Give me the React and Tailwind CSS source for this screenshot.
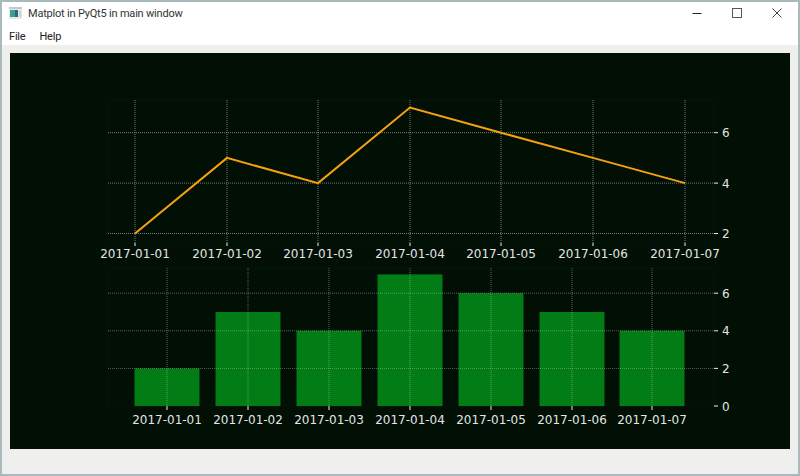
const dates = ["2017-01-01", "2017-01-02", "2017-01-03", "2017-01-04", "2017-01-05", "2017-01-06", "2017-01-07"];
const values = [2, 5, 4, 7, 6, 5, 4];

const lineX = [135, 227, 318, 410, 501, 593, 685];
const barX = [167, 248, 329, 410, 491, 572, 652];

const lineY = (v) => 233.5 - (v - 2) * 25.2;
const barY = (v) => 406 - v * 18.8;

function Charts() {
  return (
    <svg viewBox="10 53 780 396" className="block w-full h-full" style={{ fontFamily: '"DejaVu Sans", sans-serif' }}>
      {/* top plot */}
      <rect x="108" y="100" width="606" height="143" fill="none" stroke="#07160b" strokeWidth="1" />
      {lineX.map((x) => (
        <line key={x} x1={x} x2={x} y1="100" y2="243" stroke="#a5afa7" strokeWidth="0.7" strokeDasharray="1 1" />
      ))}
      {[2, 4, 6].map((v) => (
        <line key={v} x1="108" x2="714" y1={lineY(v)} y2={lineY(v)} stroke="#a5afa7" strokeWidth="0.7" strokeDasharray="1 1" />
      ))}
      <polyline
        points={values.map((v, i) => `${lineX[i]},${lineY(v)}`).join(" ")}
        fill="none"
        stroke="#f5a20f"
        strokeWidth="2"
      />
      {lineX.map((x, i) => (
        <g key={x}>
          <line x1={x} x2={x} y1="243" y2="246" stroke="#eeeeee" strokeWidth="1" />
          <text x={x} y="258" textAnchor="middle" fontSize="12" fill="#e4e6e4">{dates[i]}</text>
        </g>
      ))}
      {[2, 4, 6].map((v) => (
        <g key={v}>
          <line x1="714" x2="718" y1={lineY(v)} y2={lineY(v)} stroke="#eeeeee" strokeWidth="1" />
          <text x="722" y={lineY(v) + 4.5} fontSize="12" fill="#e4e6e4">{v}</text>
        </g>
      ))}

      {/* bottom plot */}
      <rect x="108" y="268" width="606" height="138" fill="none" stroke="#07160b" strokeWidth="1" />
      {values.map((v, i) => (
        <rect key={i} x={barX[i] - 32.5} y={barY(v)} width="65" height={406 - barY(v)} fill="#027d16" />
      ))}
      {barX.map((x) => (
        <line key={x} x1={x} x2={x} y1="268" y2="406" stroke="#a8c0ac" strokeWidth="0.7" strokeDasharray="1 1" opacity="0.75" />
      ))}
      {[2, 4, 6].map((v) => (
        <line key={v} x1="108" x2="714" y1={barY(v)} y2={barY(v)} stroke="#a8b5aa" strokeWidth="0.7" strokeDasharray="1 1" opacity="0.75" />
      ))}
      {barX.map((x, i) => (
        <g key={x}>
          <line x1={x} x2={x} y1="406" y2="410" stroke="#eeeeee" strokeWidth="1" />
          <text x={x} y="424" textAnchor="middle" fontSize="12" fill="#e4e6e4">{dates[i]}</text>
        </g>
      ))}
      {[0, 2, 4, 6].map((v) => (
        <g key={v}>
          <line x1="714" x2="718" y1={barY(v)} y2={barY(v)} stroke="#eeeeee" strokeWidth="1" />
          <text x="722" y={barY(v) + 4.5} fontSize="12" fill="#e4e6e4">{v}</text>
        </g>
      ))}
    </svg>
  );
}

function AppIcon() {
  return (
    <svg width="13" height="12" viewBox="0 0 13 12" className="shrink-0">
      <rect x="0" y="0" width="13" height="12" fill="#e6eaec" />
      <rect x="0" y="0" width="13" height="2" fill="#c3cace" />
      <rect x="1" y="3" width="5" height="7" fill="#3aa08f" />
      <rect x="6" y="3" width="3" height="7" fill="#2f6680" />
      <rect x="10" y="4" width="2" height="6" fill="#c6cfd3" />
    </svg>
  );
}

export default function App() {
  return (
    <div
      className="w-[800px] h-[476px] flex flex-col bg-[#eff0ed] border-2 border-[#a8babb] overflow-hidden text-[11px] text-[#1c1c1c]"
      style={{ fontFamily: 'Roboto, sans-serif' }}
    >
      {/* title bar */}
      <div className="h-[22px] shrink-0 flex items-center bg-white pl-[7px] tracking-[-0.2px]">
        <AppIcon />
        <span className="ml-[6px] pt-[2px] text-[#333]">Matplot in PyQt5 in main window</span>
        <div className="ml-auto flex items-center h-full translate-x-[-1px]">
          <div className="w-[40px] flex justify-center">
            <svg width="10" height="10" viewBox="0 0 10 10"><path d="M0.5 5.5H9.5" stroke="#222" strokeWidth="1" /></svg>
          </div>
          <div className="w-[40px] flex justify-center">
            <svg width="10" height="10" viewBox="0 0 10 10"><rect x="0.5" y="0.5" width="9" height="9" fill="none" stroke="#555" /></svg>
          </div>
          <div className="w-[40px] flex justify-center">
            <svg width="10" height="10" viewBox="0 0 10 10"><path d="M0.5 0.5L9.5 9.5M9.5 0.5L0.5 9.5" stroke="#444" strokeWidth="1" /></svg>
          </div>
        </div>
      </div>

      {/* menu bar */}
      <div className="h-[21px] shrink-0 flex items-center gap-[14px] bg-white pl-[7px] pt-[5px] text-[#222] tracking-[-0.2px]">
        <span>File</span>
        <span>Help</span>
      </div>

      {/* canvas */}
      <div className="flex-1 min-h-0 pt-[8px] px-[8px] pb-[25px]">
        <div className="w-full h-full bg-[#010f05]">
          <Charts />
        </div>
      </div>
    </div>
  );
}
